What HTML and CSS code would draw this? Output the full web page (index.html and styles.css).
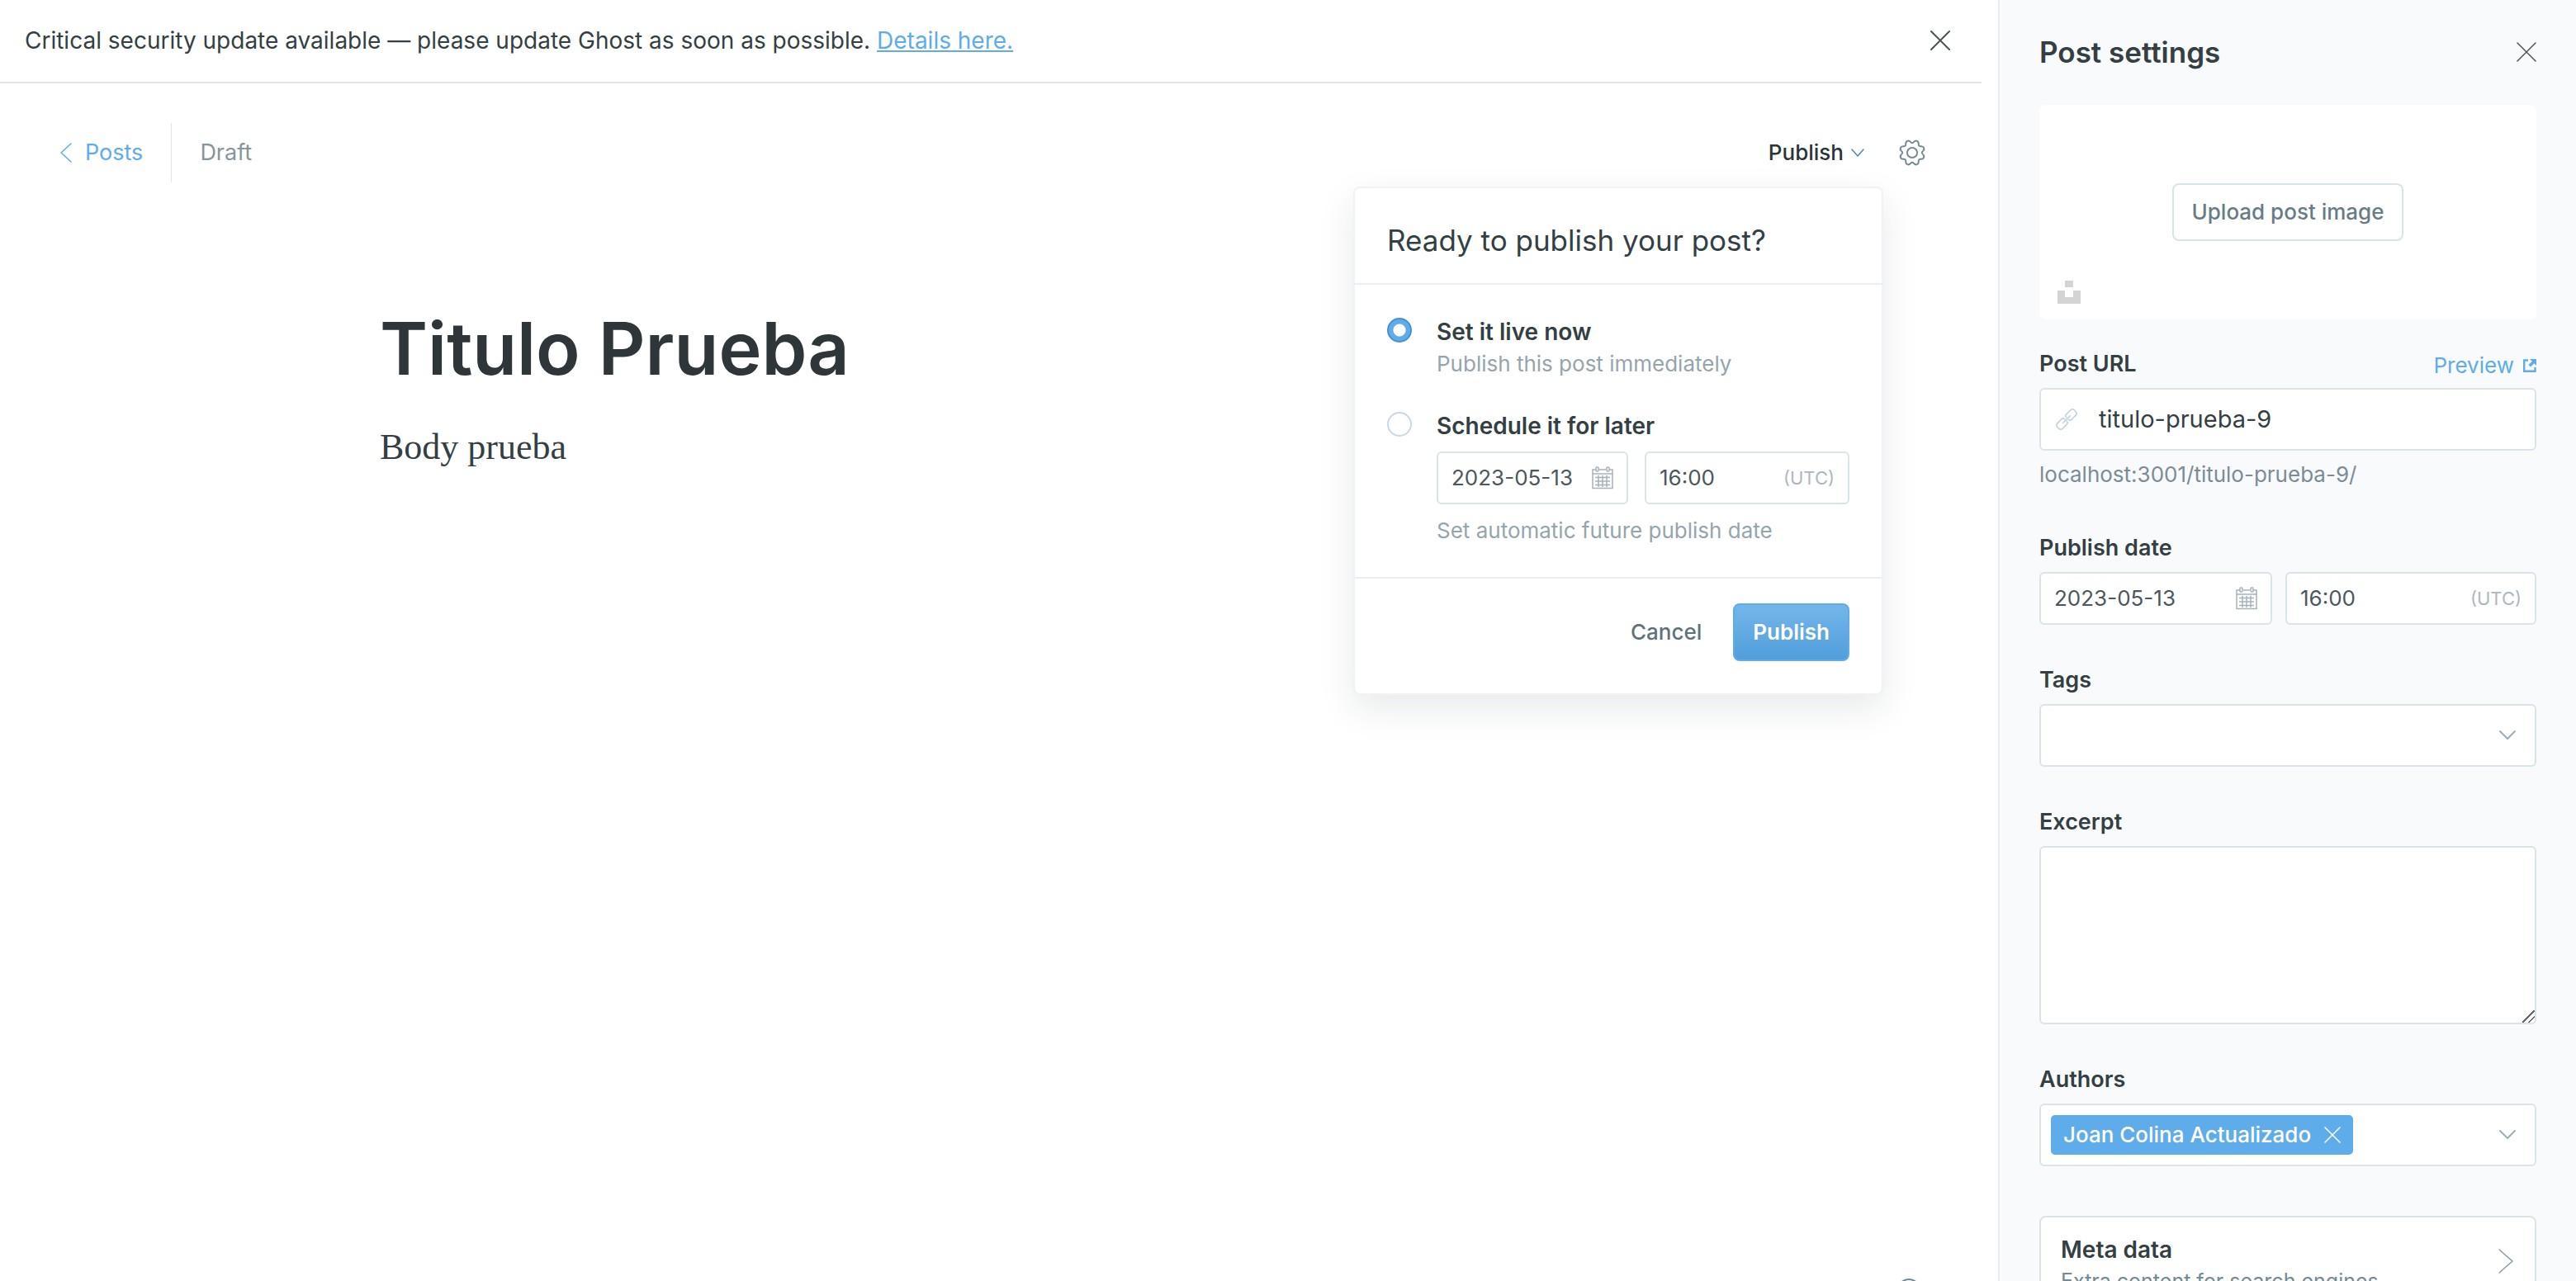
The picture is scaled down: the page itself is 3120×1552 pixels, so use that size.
FILE: index.html
```html
<!DOCTYPE html>
<html lang="en">
<head>
<meta charset="utf-8">
<title>Editor</title>
<link rel="stylesheet" href="styles.css">
</head>
<body>
<main class="main">
  <div class="alert" role="alert">
    <p class="alert-text">Critical security update available — please update Ghost as soon as possible. <a class="alert-link" href="#">Details here.</a></p>
    <button class="icon-button" type="button" aria-label="Close alert">
      <svg width="24" height="24" viewBox="0 0 24 24" fill="none" stroke="currentColor" stroke-width="2" stroke-linecap="round"><path d="M1 1l22 22M23 1L1 23"/></svg>
    </button>
  </div>

  <header class="toolbar">
    <nav class="breadcrumb">
      <a class="back-link" href="#">
        <svg width="14" height="24" viewBox="0 0 14 24" fill="none" stroke="currentColor" stroke-width="1.5" stroke-linecap="round" stroke-linejoin="round"><path d="M13 1L1 12l12 11"/></svg>
        Posts
      </a>
      <span class="status">Draft</span>
    </nav>
    <div class="actions">
      <div class="publish-menu">
        <button class="publish-trigger" type="button" aria-expanded="true">
          Publish
          <svg width="16" height="10" viewBox="0 0 16 10" fill="none" stroke="currentColor" stroke-width="1.5" stroke-linecap="round" stroke-linejoin="round"><path d="M1 1l7 8 7-8"/></svg>
        </button>
        <form class="popover">
          <h2 class="popover-title">Ready to publish your post?</h2>
          <div class="popover-body">
            <div class="choice">
              <input class="radio" type="radio" name="when" id="when-now" checked>
              <div class="choice-content">
                <label class="choice-label" for="when-now">Set it live now</label>
                <p class="choice-note">Publish this post immediately</p>
              </div>
            </div>
            <div class="choice">
              <input class="radio" type="radio" name="when" id="when-later">
              <div class="choice-content">
                <label class="choice-label" for="when-later">Schedule it for later</label>
                <div class="schedule-fields">
                  <div class="field field-date">
                    <input class="field-input" type="text" value="2023-05-13" aria-label="Schedule date">
                    <svg class="calendar" width="26" height="28" viewBox="0 0 26 28" fill="none" stroke="currentColor" stroke-width="1.5"><path d="M5 4H1v22.500h24V4h-4M9 4h8M1 9h24M4 13.500h18M4 18h18M4 22.500h18M8 11v14M13 11v14M18 11v14"/><rect x="5" y="1" width="3" height="5" rx="1"/><rect x="18" y="1" width="3" height="5" rx="1"/></svg>
                  </div>
                  <div class="field field-time">
                    <input class="field-input" type="text" value="16:00" aria-label="Schedule time">
                    <span class="zone">(UTC)</span>
                  </div>
                </div>
                <p class="choice-note">Set automatic future publish date</p>
              </div>
            </div>
          </div>
          <div class="popover-footer">
            <button class="cancel" type="button">Cancel</button>
            <button class="primary" type="submit">Publish</button>
          </div>
        </form>
      </div>
      <button class="icon-button gear" type="button" aria-label="Settings">
        <svg width="34" height="34" viewBox="-19 -19 38 38" fill="none" stroke="currentColor" stroke-width="2.2"><circle r="6.8"/><path d="M14.4 2.1Q16.8 4.2 15.8 6.55Q14.8 8.9 11.65 8.7Q8.5 8.5 8.7 11.65Q8.9 14.8 6.55 15.8Q4.2 16.8 2.1 14.4Q0 12-2.1 14.4Q-4.2 16.8-6.55 15.8Q-8.9 14.8-8.7 11.65Q-8.5 8.5-11.65 8.7Q-14.8 8.9-15.8 6.55Q-16.8 4.2-14.4 2.1Q-12 0-14.4-2.1Q-16.8-4.2-15.8-6.55Q-14.8-8.9-11.65-8.7Q-8.5-8.5-8.7-11.65Q-8.9-14.8-6.55-15.8Q-4.2-16.8-2.1-14.4Q0-12 2.1-14.4Q4.2-16.8 6.55-15.8Q8.9-14.8 8.7-11.65Q8.5-8.5 11.65-8.7Q14.8-8.9 15.8-6.55Q16.8-4.2 14.4-2.1Q12 0 14.4 2.1z"/></svg>
      </button>
    </div>
  </header>

  <article class="editor">
    <h1 class="post-title">Titulo Prueba</h1>
    <p class="post-body">Body prueba</p>
  </article>

  <button class="help" type="button" aria-label="Help"></button>
</main>

<aside class="sidebar">
  <header class="sidebar-header">
    <h2 class="sidebar-title">Post settings</h2>
    <button class="icon-button" type="button" aria-label="Close settings">
      <svg width="24" height="24" viewBox="0 0 24 24" fill="none" stroke="currentColor" stroke-width="1.5" stroke-linecap="round"><path d="M1 1l22 22M23 1L1 23"/></svg>
    </button>
  </header>

  <div class="uploader">
    <button class="upload-button" type="button">Upload post image</button>
    <button class="unsplash" type="button" aria-label="Unsplash">
      <svg width="28" height="28" viewBox="0 0 28 28" fill="currentColor"><path d="M9 0h10v8H9zM0 12h9v8h10v-8h9v16H0z"/></svg>
    </button>
  </div>

  <div class="group">
    <div class="label-row">
      <label class="label" for="slug">Post URL</label>
      <a class="preview" href="#">Preview
        <svg width="16" height="16" viewBox="0 0 16 16"><path d="M6 1.500H1.200v13.300h13.300V10" fill="none" stroke="currentColor" stroke-width="2.400"/><path d="M8 0h8v8l-2.700-2.700L9 9.500 6.500 7l4.300-4.200z" fill="currentColor"/></svg>
      </a>
    </div>
    <div class="field field-large">
      <svg class="link-icon" width="26" height="26" viewBox="-13 -13 26 26" fill="none" stroke="currentColor" stroke-width="1.5" stroke-linecap="round"><g transform="rotate(-45)"><path d="M-1.500-1.800Q-1.500-4.500-4.200-4.500H-11Q-14.500-4.500-14.500-1V1Q-14.500 4.500-11 4.500H-4.200Q-1.500 4.500-1.500 1.800M1.500-1.800Q1.500-4.500 4.200-4.500H11Q14.500-4.500 14.500-1V1Q14.500 4.500 11 4.500H4.200Q1.500 4.500 1.500 1.800M-6 0H6"/></g></svg>
      <input class="field-input" type="text" id="slug" value="titulo-prueba-9">
    </div>
    <p class="hint">localhost:3001/titulo-prueba-9/</p>
  </div>

  <div class="group">
    <label class="label" for="date">Publish date</label>
    <div class="date-fields">
      <div class="field field-date">
        <input class="field-input" type="text" id="date" value="2023-05-13">
        <svg class="calendar" width="26" height="28" viewBox="0 0 26 28" fill="none" stroke="currentColor" stroke-width="1.5"><path d="M5 4H1v22.500h24V4h-4M9 4h8M1 9h24M4 13.500h18M4 18h18M4 22.500h18M8 11v14M13 11v14M18 11v14"/><rect x="5" y="1" width="3" height="5" rx="1"/><rect x="18" y="1" width="3" height="5" rx="1"/></svg>
      </div>
      <div class="field field-time">
        <input class="field-input" type="text" value="16:00" aria-label="Publish time">
        <span class="zone">(UTC)</span>
      </div>
    </div>
  </div>

  <div class="group">
    <label class="label" for="tags">Tags</label>
    <div class="field field-large">
      <select class="picker" id="tags"><option></option></select>
      <svg class="caret" width="22" height="14" viewBox="0 0 22 14" fill="none" stroke="currentColor" stroke-width="2" stroke-linecap="round" stroke-linejoin="round"><path d="M2 2l9 9 9-9"/></svg>
    </div>
  </div>

  <div class="group">
    <label class="label" for="excerpt">Excerpt</label>
    <textarea class="textarea" id="excerpt"></textarea>
  </div>

  <div class="group group-last">
    <label class="label" for="authors">Authors</label>
    <div class="field field-large field-tokens">
      <span class="token">Joan Colina Actualizado
        <button class="token-remove" type="button" aria-label="Remove author">
          <svg width="20" height="20" viewBox="0 0 20 20" fill="none" stroke="currentColor" stroke-width="1.5" stroke-linecap="round"><path d="M1 1l18 18M19 1L1 19"/></svg>
        </button>
      </span>
      <select class="picker" id="authors"><option></option></select>
      <svg class="caret" width="22" height="14" viewBox="0 0 22 14" fill="none" stroke="currentColor" stroke-width="2" stroke-linecap="round" stroke-linejoin="round"><path d="M2 2l9 9 9-9"/></svg>
    </div>
  </div>

  <button class="nav-card" type="button">
    <span class="nav-card-text">
      <b class="nav-card-title">Meta data</b>
      <span class="nav-card-note">Extra content for search engines</span>
    </span>
    <svg width="18" height="30" viewBox="0 0 18 30" fill="none" stroke="currentColor" stroke-width="1.5" stroke-linecap="round" stroke-linejoin="round"><path d="M1 1l16 14L1 29"/></svg>
  </button>
</aside>
</body>
</html>
```
FILE: styles.css
```css
:root {
  --ink: #343f44;
  --mid: #738a94;
  --light: #95a5ad;
  --line: #d9e4e9;
  --blue: #5eace9;
}

* { box-sizing: border-box; }

body {
  margin: 0;
  display: flex;
  height: 100vh;
  overflow: hidden;
  background: #fff;
  color: var(--ink);
  font: 400 26px/38px Inter, sans-serif;
}

h1, h2, p { margin: 0; }
button, input, select, textarea { font: inherit; color: inherit; margin: 0; }
button { padding: 0; border: 0; background: none; }
a { color: var(--blue); }
svg { display: block; flex: none; }

.main { flex: 1; min-width: 0; }

.alert {
  display: flex;
  align-items: center;
  justify-content: space-between;
  margin-right: 20px;
  padding: 30px 38px 31px 30px;
  border-bottom: 2px solid #e1e3e4;
  font-size: 28px;
}

.icon-button { color: #4a5459; }

.toolbar {
  display: flex;
  align-items: center;
  justify-content: space-between;
  padding: 48px 87px 0 73px;
}
.breadcrumb, .actions { display: flex; align-items: center; }
.breadcrumb { font-size: 27px; }
.back-link {
  display: flex;
  align-items: center;
  gap: 16px;
  height: 72px;
  padding-right: 34px;
  border-right: 1px solid #dfe6ea;
  text-decoration: none;
}
.status { padding-left: 34px; color: #8595a0; }
.actions { gap: 41px; }
.publish-menu { position: relative; }
.publish-trigger { display: flex; align-items: center; gap: 9px; color: #2b3539; font-weight: 500; }
.publish-trigger svg { color: #5686ab; }
.gear { color: var(--mid); }

.popover {
  position: absolute;
  top: 60px;
  right: -23px;
  width: 642px;
  border: 2px solid #f0f2f3;
  border-radius: 8px;
  background: #fff;
  box-shadow: 0 16px 44px rgba(20, 40, 50, 0.1);
}
.popover-title {
  padding: 39px 39px 28px;
  border-bottom: 2px solid #e8eef2;
  font-size: 35px;
  line-height: 48px;
  font-weight: 400;
}
.popover-body { padding: 38px 39px 36px; display: grid; gap: 36px; }
.choice { display: flex; gap: 30px; }
.choice-content { flex: 1; min-width: 0; }
.choice-label { display: block; font-size: 28px; font-weight: 600; }
.choice-note { line-height: 40px; color: var(--light); }
.radio {
  appearance: none;
  flex: none;
  width: 30px;
  height: 30px;
  margin-top: 2px;
  border: 2px solid #c8d8e4;
  border-radius: 50%;
  background: #fff;
}
.radio:checked {
  border-color: #4491d8;
  background: radial-gradient(circle, #fff 7px, var(--blue) 8px);
}
.schedule-fields { display: grid; grid-template-columns: 232px 1fr; gap: 20px; margin: 12px 0; }

.popover-footer {
  display: flex;
  align-items: center;
  justify-content: flex-end;
  gap: 38px;
  padding: 30px 39px 39px;
  border-top: 2px solid #e8eef2;
}
.cancel { color: #5f717b; font-weight: 500; }
.primary {
  height: 70px;
  padding: 0 22px;
  border: 2px solid #5eace9;
  border-radius: 8px;
  background: linear-gradient(#74b6eb, #519edb);
  color: #fff;
  font-weight: 600;
}

.field {
  position: relative;
  display: flex;
  align-items: center;
  height: 64px;
  padding: 0 16px;
  border: 2px solid var(--line);
  border-radius: 6px;
  background: #fff;
}
.field-large { height: 76px; padding: 0 18px; font-size: 29px; }
.field-input { flex: 1; min-width: 0; width: 0; padding: 0; border: 0; outline: 0; background: none; }
.field-date, .field-time { color: #4b575d; }
.calendar { color: #a7b2b8; }
.zone { color: #adb8be; font-size: 22px; }

.editor { max-width: 1500px; margin: 145px auto 0; }
.post-title { color: #2f3639; font-size: 88px; line-height: 112px; font-weight: 600; }
.post-body { margin-top: 32px; font: 400 44px/64px "Liberation Serif", serif; }

.help {
  position: fixed;
  right: 794px;
  bottom: -25px;
  width: 28px;
  height: 28px;
  border: 2px solid var(--mid);
  border-radius: 50%;
}

.sidebar {
  width: 700px;
  flex: none;
  padding: 0 48px;
  border-left: 2px solid #e5edf3;
  background: #f9fafc;
}
.sidebar-header {
  display: flex;
  align-items: center;
  justify-content: space-between;
  height: 125px;
  margin-bottom: 2px;
}
.sidebar-title { font-size: 35px; line-height: 48px; font-weight: 600; }

.uploader {
  position: relative;
  display: grid;
  place-items: center;
  height: 260px;
  margin-bottom: 40px;
  border-radius: 8px;
  background: #fff;
}
.upload-button {
  height: 70px;
  padding: 0 22px;
  border: 2px solid var(--line);
  border-radius: 8px;
  color: #687c86;
  font-weight: 500;
}
.unsplash { position: absolute; left: 22px; bottom: 19px; color: #d4d4d4; }

.group { margin-bottom: 52px; }
.label-row { display: flex; justify-content: space-between; }
.label { display: block; margin-bottom: 15px; font-size: 27px; line-height: 28px; font-weight: 600; }
.preview { display: flex; align-items: center; gap: 11px; height: 32px; text-decoration: none; }
.link-icon { margin-right: 26px; color: #bdd0dc; }
.hint { margin: 15px 0 60px; line-height: 28px; color: #7b8c96; }
.group + .group .label { padding-top: 1px; }
.date-fields { display: grid; grid-template-columns: 282px 1fr; gap: 16px; }
.picker { appearance: none; flex: 1; min-width: 0; height: 100%; border: 0; background: none; }
.caret { position: absolute; right: 22px; color: #9cadb8; pointer-events: none; }
.textarea {
  display: block;
  width: 100%;
  height: 216px;
  border: 2px solid var(--line);
  border-radius: 6px;
  background: #fff;
}
.textarea::-webkit-resizer {
  background: linear-gradient(135deg, transparent 46%, #666 46% 54%, transparent 54% 72%, #666 72% 80%, transparent 80%);
}
.group-last { margin-bottom: 60px; }
.field-tokens { padding-left: 12px; font-size: 26px; }
.token {
  display: flex;
  align-items: center;
  gap: 16px;
  height: 48px;
  padding: 0 15px;
  border-radius: 5px;
  background: var(--blue);
  color: #fff;
  font-weight: 500;
}
.nav-card {
  display: flex;
  align-items: flex-start;
  justify-content: space-between;
  width: 100%;
  padding: 20px 26px 20px 24px;
  border: 2px solid var(--line);
  border-radius: 8px;
  background: #fff;
  color: #8a9aa5;
  text-align: left;
}
.nav-card svg { margin-top: 18px; }
.nav-card-text { display: grid; }
.nav-card-title { color: var(--ink); font-size: 28px; font-weight: 600; }
.nav-card-note { font-size: 25px; color: var(--mid); }
```
